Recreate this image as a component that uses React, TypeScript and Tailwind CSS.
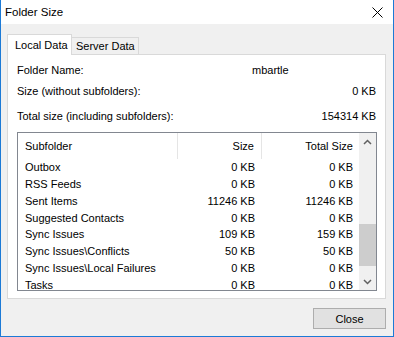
import React from 'react';

type Row = { name: string; size: string; total: string };

const rows: Row[] = [
  { name: 'Outbox', size: '0 KB', total: '0 KB' },
  { name: 'RSS Feeds', size: '0 KB', total: '0 KB' },
  { name: 'Sent Items', size: '11246 KB', total: '11246 KB' },
  { name: 'Suggested Contacts', size: '0 KB', total: '0 KB' },
  { name: 'Sync Issues', size: '109 KB', total: '159 KB' },
  { name: 'Sync Issues\\Conflicts', size: '50 KB', total: '50 KB' },
  { name: 'Sync Issues\\Local Failures', size: '0 KB', total: '0 KB' },
  { name: 'Tasks', size: '0 KB', total: '0 KB' },
];

function Chevron({ down }: { down?: boolean }) {
  return (
    <svg width="9" height="6" viewBox="0 0 9 6" className={down ? 'rotate-180' : ''}>
      <path d="M1 5 L4.5 1.5 L8 5" fill="none" stroke="#606060" strokeWidth="1.5" />
    </svg>
  );
}

export default function App() {
  return (
    <div
      className="flex h-[337px] w-[394px] flex-col border-x border-b border-[#1c7ad6] text-[11px] leading-4 text-black"
      style={{ fontFamily: '"Liberation Sans", Arial, sans-serif' }}
    >
      {/* title bar */}
      <div className="flex h-[25px] shrink-0 items-center justify-between border-b border-[#f0f0f0] bg-white pl-[4px] pr-[10px]">
        <span className="text-[11.5px]">Folder Size</span>
        <svg width="11" height="11" viewBox="0 0 11 11">
          <path d="M0.5 0.5 L10.5 10.5 M10.5 0.5 L0.5 10.5" stroke="#000" strokeWidth="1" />
        </svg>
      </div>

      <div className="flex flex-1 flex-col bg-[#f0f0f0] pl-[6px] pr-[7px] pt-[8px]">
        {/* tabs */}
        <div className="flex h-[21px] items-end">
          <div className="relative z-10 -mb-px flex h-[21px] w-[65px] items-center border border-b-0 border-[#d9d9d9] bg-white pl-[7px]">
            Local Data
          </div>
          <div className="flex h-[17px] w-[67px] items-center border border-b-0 border-l-0 border-[#d9d9d9] bg-[#f0f0f0] pl-[4px]">
            Server Data
          </div>
        </div>

        {/* panel */}
        <div className="flex h-[245px] flex-col border border-[#d9d9d9] bg-white pl-[9px] pr-[9px] pt-[7px]">
          <div className="flex h-[16px] items-center">
            <span className="w-[235px]">Folder Name:</span>
            <span>mbartle</span>
          </div>
          <div className="mt-[5px] flex h-[16px] items-center justify-between">
            <span>Size (without subfolders):</span>
            <span>0 KB</span>
          </div>
          <div className="mt-[9px] flex h-[16px] items-center justify-between">
            <span>Total size (including subfolders):</span>
            <span>154314 KB</span>
          </div>

          {/* list */}
          <div className="mt-[8px] flex h-[159px] w-[360px] border border-[#828790] bg-white">
            <div className="flex-1 overflow-hidden">
              <div className="flex h-[26px] items-center">
                <div className="flex h-full w-[160px] items-center border-r border-[#e5e5e5] pl-[7px]">Subfolder</div>
                <div className="flex h-full w-[84px] items-center justify-end border-r border-[#e5e5e5] pr-[7px]">Size</div>
                <div className="flex h-full flex-1 items-center justify-end pr-[6px]">Total Size</div>
              </div>
              {rows.map((r) => (
                <div key={r.name} className="flex h-[16.75px] items-center">
                  <div className="w-[160px] whitespace-nowrap pl-[7px]">{r.name}</div>
                  <div className="w-[84px] pr-[7px] text-right">{r.size}</div>
                  <div className="flex-1 pr-[6px] text-right">{r.total}</div>
                </div>
              ))}
            </div>
            {/* scrollbar */}
            <div className="flex w-[17px] shrink-0 flex-col bg-[#f0f0f0]">
              <div className="flex h-[17px] items-center justify-center">
                <Chevron />
              </div>
              <div className="flex-1 pt-[74px]">
                <div className="mx-auto h-[42px] w-[17px] bg-[#cdcdcd]" />
              </div>
              <div className="flex h-[17px] items-center justify-center">
                <Chevron down />
              </div>
            </div>
          </div>
        </div>

        {/* footer */}
        <div className="flex justify-end pt-[9px]">
          <button className="h-[21px] w-[73px] border border-[#adadad] bg-[#e1e1e1] text-[11px] leading-4">
            Close
          </button>
        </div>
      </div>
    </div>
  );
}
